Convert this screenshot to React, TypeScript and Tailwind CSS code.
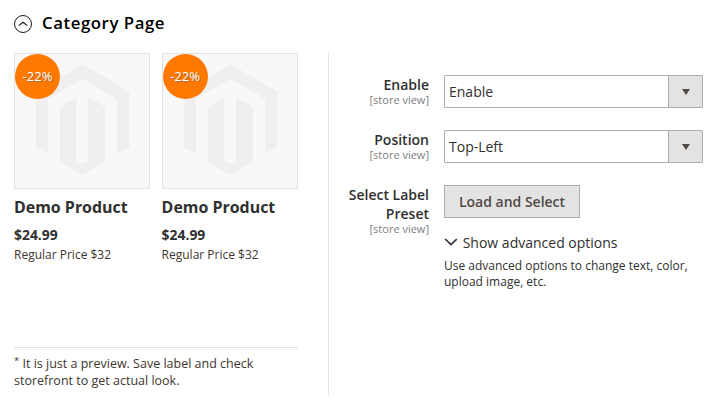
import React from "react";

function Placeholder() {
  return (
    <svg className="block h-[134px] w-[134px]" viewBox="1 1 134 134" fill="#efefef">
      <path d="M68.7 11.3 115.3 38.7V94L103 100.5V46L68.7 26 34 46V100.5L21.7 94V38.7Z" />
      <path d="M46 53.7 62.3 44.3V107.7L68.5 111.3 74.3 107.7V44.3L91 53.7V108.7L68.7 122 46 108.7Z" />
    </svg>
  );
}

function Product() {
  return (
    <div className="w-[136px]">
      <div className="relative h-[136px] border border-[#e3e3e3] bg-[#f8f8f8]">
        <Placeholder />
        <div className="absolute left-0 top-0 flex h-[45px] w-[45px] items-center justify-center rounded-full bg-[#ff7800] text-[13px] text-white [text-shadow:1px_1px_0_rgba(100,100,100,0.6)]">
          -22%
        </div>
      </div>
      <div className="mt-[6px] whitespace-nowrap text-[15.95px] font-bold leading-[24px]">Demo Product</div>
      <div className="mt-[6px] text-[13.9px] font-bold leading-[20px]">$24.99</div>
      <div className="mt-[1px] text-[12px] leading-[18px] text-[#41362f]">Regular Price $32</div>
    </div>
  );
}

function Label({ children }: { children: React.ReactNode }) {
  return (
    <div className="w-[100px] text-right text-[14px] font-semibold leading-[19px]">
      <div>{children}</div>
      <div className="text-[11px] font-normal leading-[12px] text-[#808080]">[store view]</div>
    </div>
  );
}

function Select({ value }: { value: string }) {
  return (
    <div className="flex h-[33px] w-[259px] rounded-[1px] border border-[#adadad] text-[14px] text-[#303030]">
      <div className="flex flex-1 items-center pl-[4px]">{value}</div>
      <div className="flex w-[34px] items-center justify-center border-l border-[#adadad] bg-[#e3e3e3]">
        <svg className="mt-px h-[6px] w-[8px]" viewBox="0 0 8 6" fill="#514943">
          <path d="M0 0H8L4 6Z" />
        </svg>
      </div>
    </div>
  );
}

export default function App() {
  return (
    <div className="h-[410px] w-[716px] overflow-hidden bg-white font-['Open_Sans',sans-serif] text-[#303030]">
      <div className="flex h-[53px] items-start pl-[14px] pt-[11px]">
        <svg className="mt-[4px] h-[18px] w-[18px]" viewBox="0 0 18 18" fill="none" stroke="#1a1a1a">
          <circle cx="9" cy="9" r="8.5" />
          <path d="M4.7 10.6 9 7.2 13.3 10.6" strokeWidth="1.2" />
        </svg>
        <h1 className="ml-[10px] text-[16.8px] font-semibold leading-[24px] tracking-[0.56px] text-black">Category Page</h1>
      </div>
      <div className="flex pl-[14px]">
        <div className="flex h-[342px] w-[315px] flex-col border-r border-[#e3e3e3]">
          <div className="flex h-[294px] gap-[11.6px]">
            <Product />
            <Product />
          </div>
          <p className="w-[284px] border-t border-[#e3e3e3] pt-[7px] text-[12.5px] leading-[17px] text-[#41362f]">
            <span className="relative -top-[4px] text-[9.5px] leading-[0]">*</span> It is just a preview. Save label and check
            <br />
            storefront to get actual look.
          </p>
        </div>
        <div className="pt-[22px]">
          <div className="flex h-[55px] gap-[15px]">
            <Label>Enable</Label>
            <Select value="Enable" />
          </div>
          <div className="flex h-[55px] gap-[15px]">
            <Label>Position</Label>
            <Select value="Top-Left" />
          </div>
          <div className="flex gap-[15px]">
            <Label>
              Select Label
              <br />
              Preset
            </Label>
            <div>
              <button className="block h-[33px] w-[136px] border border-[#adadad] bg-[#e3e3e3] text-[14px] font-semibold text-[#514943]">
                Load and Select
              </button>
              <div className="mt-[15px] flex h-[20px] items-center text-[14px] leading-[20px] text-[#303030]">
                <svg className="mb-[3px] mr-[5.7px] h-[8px] w-[13px]" viewBox="0 0 13 8" fill="none" stroke="#303030" strokeWidth="1.7">
                  <path d="M1.2 1 7 6.6 12.8 1" />
                </svg>
                Show advanced options
              </div>
              <p className="mt-[5px] whitespace-nowrap text-[12px] leading-[16px]">
                Use advanced options to change text, color,
                <br />
                upload image, etc.
              </p>
            </div>
          </div>
        </div>
      </div>
    </div>
  );
}
